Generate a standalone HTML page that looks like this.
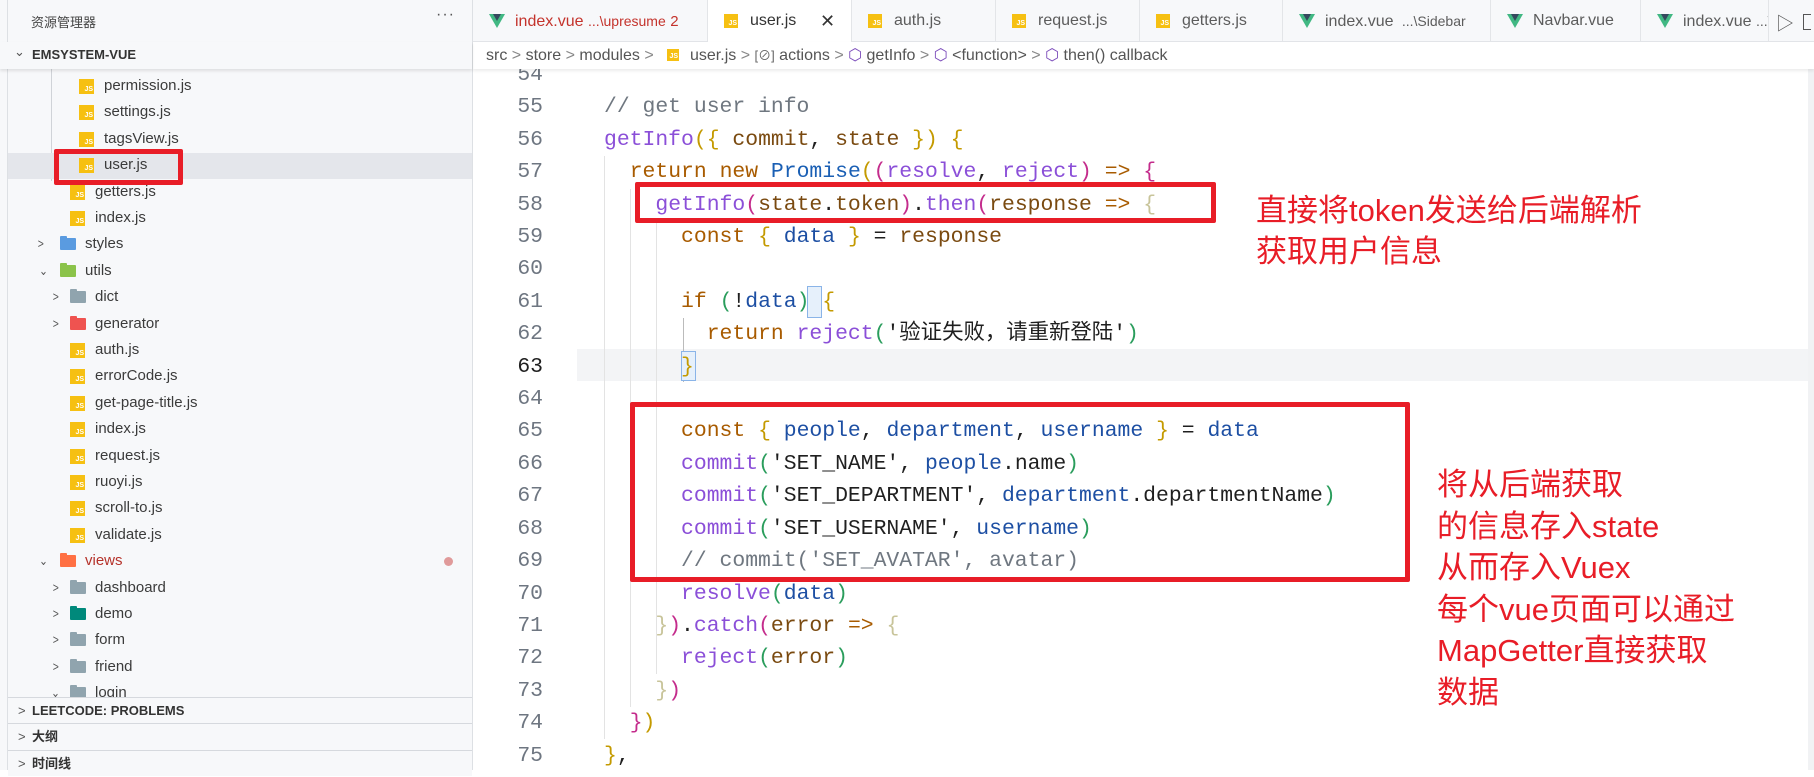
<!DOCTYPE html>
<html><head><meta charset="utf-8">
<style>
*{margin:0;padding:0;box-sizing:border-box}
body{width:1814px;height:770px;overflow:hidden;background:#fff;position:relative;font-family:"Liberation Sans","Noto Sans CJK SC",sans-serif;color:#3b3b3b}
.a{position:absolute}
#side{left:0;top:0;width:473px;height:770px;background:#f7f8fa;border-right:1px solid #dde0e4}
#side:before{content:"";position:absolute;left:7px;top:0;width:1px;height:770px;background:#dde0e4}
.row{position:absolute;left:8px;width:464px;height:26.4px;font-size:15px;line-height:26.4px;white-space:nowrap}
.js{position:absolute;top:6px;width:15px;height:15px;background:#f6c012;color:#fff;font:bold 7px "Liberation Sans",sans-serif;line-height:8px;text-align:right;padding-top:7px;padding-right:1px}
.fd{position:absolute;top:7px;width:16px;height:12px;background:#90a4ae;border-radius:1px}
.fd:before{content:"";position:absolute;left:0;top:-2px;width:7px;height:3px;background:inherit;border-radius:1px 1px 0 0}
.chev{position:absolute;top:0;font-size:13px;color:#555;transform:scaleX(.8)}
.sec{position:absolute;left:8px;width:464px;height:26px;font-size:13px;font-weight:bold;line-height:26px;color:#333;border-top:1px solid #d6d9de}
#tabs{left:473px;top:0;width:1341px;height:42px;background:#f7f8fa;border-bottom:1px solid #e3e5e8}
.tab{position:absolute;top:0;height:42px;border-right:1px solid #e3e5e8;font-size:16px;line-height:42px;color:#5c5c5c;white-space:nowrap}
.vue{position:absolute;top:14px;width:0;height:0;border-left:8px solid transparent;border-right:8px solid transparent;border-top:14px solid #41b883}
.vue:after{content:"";position:absolute;left:-4px;top:-14px;border-left:4px solid transparent;border-right:4px solid transparent;border-top:7px solid #35495e}
.tjs{position:absolute;top:14px;width:14px;height:14px;background:#f6c012;color:#fff;font:bold 7px "Liberation Sans",sans-serif;text-align:right;line-height:8px;padding-top:6px;padding-right:1px}
#bc{left:473px;top:42px;width:1341px;height:27px;background:#fff;box-shadow:0 2px 3px rgba(0,0,0,.08);font-size:16px;line-height:27px;color:#555;white-space:nowrap;z-index:2}
.ln{position:absolute;left:480px;width:63px;text-align:right;font:21.4px/32.4px "Liberation Mono",monospace;color:#6e7681}
pre{position:absolute;left:604px;top:59px;font:21.4px/32.4px "Liberation Mono","Noto Sans CJK SC",monospace;color:#1f1f1f}
.c{color:#6f7780}.k{color:#a85b00}.f{color:#8b4fd8}.v{color:#1d4fa3}.p{color:#7a4a10}.g{color:#c49a00}.m{color:#c42c8c}.gr{color:#2a9d5c}.b{color:#1a5fb4}
.box{position:absolute;border:5px solid #e81d27;border-radius:2px}
.note{position:absolute;color:#e81d27;font-family:"Liberation Sans","Noto Sans CJK SC",sans-serif;font-size:31px;white-space:nowrap}
.guide{position:absolute;width:1px;background:#e3e3e3}
</style></head><body>

<div id="side" class="a">
  <div class="a" style="left:31px;top:12px;font-size:13px;color:#444">资源管理器</div>
  <div class="a" style="left:436px;top:6px;font-size:16px;color:#555;letter-spacing:1px">···</div>
  <div class="a" style="left:0;top:42px;width:472px;height:27px;background:#f7f8fa;box-shadow:0 2px 3px rgba(0,0,0,.1);z-index:3">
    <span class="a" style="left:14px;top:2px;font-size:13px;color:#555">&#8964;</span>
    <span class="a" style="left:32px;top:5px;font-size:13px;font-weight:bold;color:#333">EMSYSTEM-VUE</span>
  </div>
  <div class="a" style="left:51px;top:69px;width:1px;height:112px;background:#d0d3d8"></div>
  <div class="a" style="left:8px;top:152.6px;width:464px;height:26.4px;background:#e4e6eb"></div>

  <div class="row" style="top:73px"><span class="js" style="left:71px">JS</span><span class="a" style="left:96px">permission.js</span></div>
  <div class="row" style="top:99.4px"><span class="js" style="left:71px">JS</span><span class="a" style="left:96px">settings.js</span></div>
  <div class="row" style="top:125.8px"><span class="js" style="left:71px">JS</span><span class="a" style="left:96px">tagsView.js</span></div>
  <div class="row" style="top:152.2px"><span class="js" style="left:71px">JS</span><span class="a" style="left:96px">user.js</span></div>
  <div class="row" style="top:178.6px"><span class="js" style="left:62px">JS</span><span class="a" style="left:87px">getters.js</span></div>
  <div class="row" style="top:205px"><span class="js" style="left:62px">JS</span><span class="a" style="left:87px">index.js</span></div>
  <div class="row" style="top:231.4px"><span class="chev" style="left:29px">&gt;</span><span class="fd" style="left:52px;background:#5a9be0"></span><span class="a" style="left:77px">styles</span></div>
  <div class="row" style="top:257.8px"><span class="chev" style="left:30px">&#8964;</span><span class="fd" style="left:52px;background:#8bc34a"></span><span class="a" style="left:77px">utils</span></div>
  <div class="row" style="top:284.2px"><span class="chev" style="left:44px">&gt;</span><span class="fd" style="left:62px"></span><span class="a" style="left:87px">dict</span></div>
  <div class="row" style="top:310.6px"><span class="chev" style="left:44px">&gt;</span><span class="fd" style="left:62px;background:#ef5350"></span><span class="a" style="left:87px">generator</span></div>
  <div class="row" style="top:337px"><span class="js" style="left:62px">JS</span><span class="a" style="left:87px">auth.js</span></div>
  <div class="row" style="top:363.4px"><span class="js" style="left:62px">JS</span><span class="a" style="left:87px">errorCode.js</span></div>
  <div class="row" style="top:389.8px"><span class="js" style="left:62px">JS</span><span class="a" style="left:87px">get-page-title.js</span></div>
  <div class="row" style="top:416.2px"><span class="js" style="left:62px">JS</span><span class="a" style="left:87px">index.js</span></div>
  <div class="row" style="top:442.6px"><span class="js" style="left:62px">JS</span><span class="a" style="left:87px">request.js</span></div>
  <div class="row" style="top:469px"><span class="js" style="left:62px">JS</span><span class="a" style="left:87px">ruoyi.js</span></div>
  <div class="row" style="top:495.4px"><span class="js" style="left:62px">JS</span><span class="a" style="left:87px">scroll-to.js</span></div>
  <div class="row" style="top:521.8px"><span class="js" style="left:62px">JS</span><span class="a" style="left:87px">validate.js</span></div>
  <div class="row" style="top:548.2px"><span class="chev" style="left:30px">&#8964;</span><span class="fd" style="left:52px;background:#ff7043"></span><span class="a" style="left:77px;color:#b5322a">views</span><span class="a" style="left:436px;top:9px;width:9px;height:9px;border-radius:50%;background:#e09a9a"></span></div>
  <div class="row" style="top:574.6px"><span class="chev" style="left:44px">&gt;</span><span class="fd" style="left:62px"></span><span class="a" style="left:87px">dashboard</span></div>
  <div class="row" style="top:601px"><span class="chev" style="left:44px">&gt;</span><span class="fd" style="left:62px;background:#00897b"></span><span class="a" style="left:87px">demo</span></div>
  <div class="row" style="top:627.4px"><span class="chev" style="left:44px">&gt;</span><span class="fd" style="left:62px"></span><span class="a" style="left:87px">form</span></div>
  <div class="row" style="top:653.8px"><span class="chev" style="left:44px">&gt;</span><span class="fd" style="left:62px"></span><span class="a" style="left:87px">friend</span></div>
  <div class="row" style="top:680.2px;height:17px;overflow:hidden"><span class="chev" style="left:42px">&#8964;</span><span class="fd" style="left:62px"></span><span class="a" style="left:87px">login</span></div>
  <div class="box" style="left:54px;top:149px;width:129px;height:36px"></div>

  <div class="sec" style="top:697px;background:#f7f8fa"><span class="a" style="left:10px;font-weight:normal;color:#555">&gt;</span><span class="a" style="left:24px">LEETCODE: PROBLEMS</span></div>
  <div class="sec" style="top:723px;background:#f7f8fa"><span class="a" style="left:10px;font-weight:normal;color:#555">&gt;</span><span class="a" style="left:24px">大纲</span></div>
  <div class="sec" style="top:750px;background:#f7f8fa"><span class="a" style="left:10px;font-weight:normal;color:#555">&gt;</span><span class="a" style="left:24px">时间线</span></div>
</div>

<div id="tabs" class="a">
  <div class="tab" style="left:0;width:235px;color:#c4332c"><span class="vue" style="left:16px"></span><span class="a" style="left:42px">index.vue <span style="font-size:14px">...\upresume</span> <span style="font-size:15px">2</span></span></div>
  <div class="tab" style="left:235px;width:144px;background:#fff;color:#333;height:43px"><span class="tjs" style="left:16px">JS</span><span class="a" style="left:42px">user.js</span><span class="a" style="left:112px;font-size:18px">✕</span></div>
  <div class="tab" style="left:379px;width:144px"><span class="tjs" style="left:16px">JS</span><span class="a" style="left:42px">auth.js</span></div>
  <div class="tab" style="left:523px;width:144px"><span class="tjs" style="left:16px">JS</span><span class="a" style="left:42px">request.js</span></div>
  <div class="tab" style="left:667px;width:143px"><span class="tjs" style="left:16px">JS</span><span class="a" style="left:42px">getters.js</span></div>
  <div class="tab" style="left:810px;width:208px"><span class="vue" style="left:16px"></span><span class="a" style="left:42px">index.vue <span style="font-size:14px">&nbsp;...\Sidebar</span></span></div>
  <div class="tab" style="left:1018px;width:150px"><span class="vue" style="left:16px"></span><span class="a" style="left:42px">Navbar.vue</span></div>
  <div class="tab" style="left:1168px;width:128px;overflow:hidden"><span class="vue" style="left:16px"></span><span class="a" style="left:42px">index.vue <span style="font-size:14px">...\</span></span></div>
  <div class="a" style="left:1303px;top:10px;font-size:18px;color:#555">▷</div>
  <div class="a" style="left:1330px;top:14px;width:8px;height:16px;border:1.5px solid #555;border-right:none"></div>
</div>

<div id="bc" class="a">
  <span class="a" style="left:13px">src <span style="color:#888">&gt;</span> store <span style="color:#888">&gt;</span> modules <span style="color:#888">&gt;</span></span>
  <span class="tjs" style="left:194px;top:7px;width:12px;height:12px;padding-top:4px">JS</span>
  <span class="a" style="left:217px">user.js <span style="color:#888">&gt;</span> <span style="font-size:13px;color:#666">[⊘]</span> actions <span style="color:#888">&gt;</span> <span style="color:#7c4dbb">⬡</span> getInfo <span style="color:#888">&gt;</span> <span style="color:#7c4dbb">⬡</span> &lt;function&gt; <span style="color:#888">&gt;</span> <span style="color:#7c4dbb">⬡</span> then() callback</span>
</div>

<div class="a" style="left:1808px;top:69px;width:6px;height:701px;background:#f1f2f4"></div>
<div class="a" style="left:577px;top:349px;width:1231px;height:32.4px;background:#f3f4f6"></div>

<div class="guide" style="left:604px;top:156px;height:583px"></div>
<div class="guide" style="left:630px;top:189px;height:518px"></div>
<div class="guide" style="left:656px;top:221px;height:453px"></div>
<div class="guide" style="left:683px;top:318px;height:64px;background:#bbb"></div>
<div class="a" style="left:807px;top:286px;width:15px;height:32px;border:1px solid #8ab4e8;background:#e6f0fb"></div>
<div class="a" style="left:681px;top:351px;width:15px;height:30px;border:1px solid #8ab4e8;background:#e6f0fb"></div>

<div class="ln" style="top:59px">54<br>55<br>56<br>57<br>58<br>59<br>60<br>61<br>62<br><span style="color:#1f1f1f">63</span><br>64<br>65<br>66<br>67<br>68<br>69<br>70<br>71<br>72<br>73<br>74<br>75</div>

<pre>

<span class="c">// get user info</span>
<span class="f">getInfo</span><span class="g">({</span> <span class="p">commit</span>, <span class="p">state</span> <span class="g">})</span> <span class="g">{</span>
  <span class="k">return</span> <span class="k">new</span> <span class="b">Promise</span><span class="g">(</span><span class="m">(</span><span class="f">resolve</span>, <span class="f">reject</span><span class="m">)</span> <span class="k">=&gt;</span> <span class="m">{</span>
    <span class="f">getInfo</span><span class="m">(</span><span class="p">state</span>.<span class="p">token</span><span class="m">)</span>.<span class="f">then</span><span class="m">(</span><span class="p">response</span> <span class="k">=&gt;</span> <span class="g" style="color:#c8c49a">{</span>
      <span class="k">const</span> <span class="g">{</span> <span class="v">data</span> <span class="g">}</span> = <span class="p">response</span>

      <span class="k">if</span> <span class="gr">(</span>!<span class="v">data</span><span class="gr">)</span> <span class="g">{</span>
        <span class="k">return</span> <span class="f">reject</span><span class="gr">(</span>'验证失败，请重新登陆'<span class="gr">)</span>
      <span class="g">}</span>

      <span class="k">const</span> <span class="g">{</span> <span class="v">people</span>, <span class="v">department</span>, <span class="v">username</span> <span class="g">}</span> = <span class="v">data</span>
      <span class="f">commit</span><span class="gr">(</span>'SET_NAME', <span class="v">people</span>.name<span class="gr">)</span>
      <span class="f">commit</span><span class="gr">(</span>'SET_DEPARTMENT', <span class="v">department</span>.departmentName<span class="gr">)</span>
      <span class="f">commit</span><span class="gr">(</span>'SET_USERNAME', <span class="v">username</span><span class="gr">)</span>
      <span class="c">// commit('SET_AVATAR', avatar)</span>
      <span class="f">resolve</span><span class="gr">(</span><span class="v">data</span><span class="gr">)</span>
    <span class="g" style="color:#c8c49a">}</span><span class="m">)</span>.<span class="f">catch</span><span class="m">(</span><span class="p">error</span> <span class="k">=&gt;</span> <span class="g" style="color:#c8c49a">{</span>
      <span class="f">reject</span><span class="gr">(</span><span class="p">error</span><span class="gr">)</span>
    <span class="g" style="color:#c8c49a">}</span><span class="m">)</span>
  <span class="m">}</span><span class="g">)</span>
<span class="g">}</span>,
</pre>

<div class="box" style="left:635px;top:182px;width:581px;height:41px"></div>
<div class="box" style="left:630px;top:402px;width:780px;height:180px"></div>

<div class="note" style="left:1256px;top:190px;line-height:41px">直接将token发送给后端解析<br>获取用户信息</div>
<div class="note" style="left:1437px;top:464px;line-height:41.6px">将从后端获取<br>的信息存入state<br>从而存入Vuex<br>每个vue页面可以通过<br>MapGetter直接获取<br>数据</div>
</body></html>
